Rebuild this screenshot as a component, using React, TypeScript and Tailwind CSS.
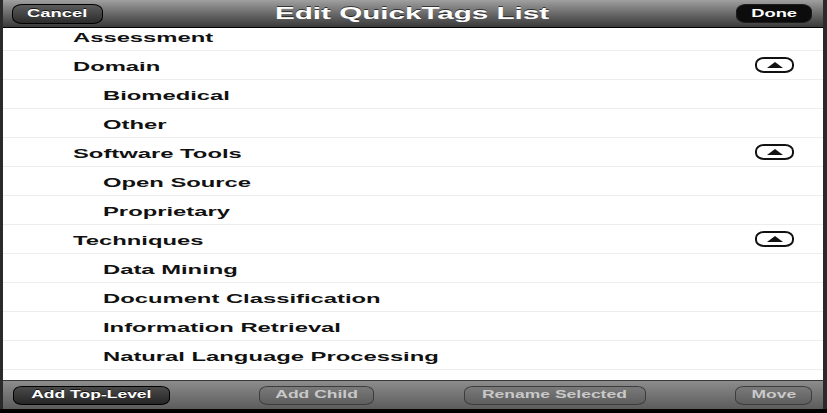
import { ReactNode } from "react";

type Tag = { label: string; level: 0 | 1; collapsible?: boolean };

const tags: Tag[] = [
  { label: "Assessment", level: 0 },
  { label: "Domain", level: 0, collapsible: true },
  { label: "Biomedical", level: 1 },
  { label: "Other", level: 1 },
  { label: "Software Tools", level: 0, collapsible: true },
  { label: "Open Source", level: 1 },
  { label: "Proprietary", level: 1 },
  { label: "Techniques", level: 0, collapsible: true },
  { label: "Data Mining", level: 1 },
  { label: "Document Classification", level: 1 },
  { label: "Information Retrieval", level: 1 },
  { label: "Natural Language Processing", level: 1 },
];

// the screen is drawn wide, so text is stretched sideways
function Wide({ children, left }: { children: ReactNode; left?: boolean }) {
  return (
    <span className={left ? "inline-block origin-left scale-x-[1.83]" : "inline-block origin-center scale-x-[1.75]"}>
      {children}
    </span>
  );
}

function BarButton({
  label,
  width,
  disabled,
}: {
  label: string;
  width: string;
  disabled?: boolean;
}) {
  return (
    <button
      className={
        "h-[19px] rounded-[9px/6px] border text-[10px] font-bold leading-none flex items-center justify-center " +
        width +
        (disabled
          ? " border-[#3c3c3c] bg-gradient-to-b from-[#7a7a7a] to-[#5e5e5e] text-[#c9c9c9]"
          : " border-black bg-gradient-to-b from-[#4a4a4a] to-[#262626] text-white [text-shadow:0_-1px_0_rgba(0,0,0,0.7)]")
      }
    >
      <Wide>{label}</Wide>
    </button>
  );
}

function CollapseToggle() {
  return (
    <button className="w-[39px] h-[16px] rounded-[9px/7px] border-2 border-[#111] bg-white flex items-center justify-center">
      <svg width="16" height="6" viewBox="0 0 16 6">
        <polygon points="8,0 16,6 0,6" fill="#111" />
      </svg>
    </button>
  );
}

export default function App() {
  return (
    <div className="w-[827px] h-[413px] bg-[#2a2a2a] flex flex-col font-['Liberation_Sans',Arial,sans-serif] overflow-hidden">
      <div className="flex-1 flex flex-col ml-[3px] mr-[4px] min-h-0">
        {/* nav bar */}
        <div className="h-[28px] shrink-0 grid grid-cols-[1fr_auto_1fr] items-center px-[9px] pr-[11px] bg-gradient-to-b from-[#a0a0a0] via-[#6a6a6a] to-[#3a3a3a] border-b border-black">
          <div>
            <button className="w-[91px] h-[20px] rounded-[10px/7px] border border-black bg-gradient-to-b from-[#5c5c5c] to-[#2c2c2c] text-white text-[10.5px] font-bold leading-none flex items-center justify-center [text-shadow:0_-1px_0_rgba(0,0,0,0.7)]">
              <Wide>Cancel</Wide>
            </button>
          </div>
          <h1 className="text-white text-[16px] font-bold leading-none [text-shadow:0_-1px_0_rgba(0,0,0,0.6)]">
            <span className="inline-block origin-center scale-x-[1.85]">Edit QuickTags List</span>
          </h1>
          <div className="flex justify-end">
            <button className="w-[76px] h-[19px] rounded-[10px/7px] border border-[#1c1c1c] bg-[#0c0c0c] text-white text-[10.5px] font-bold leading-none flex items-center justify-center">
              <Wide>Done</Wide>
            </button>
          </div>
        </div>

        {/* tag list */}
        <div className="flex-1 min-h-0 bg-white overflow-hidden">
          <ul className="-mt-[6px]">
            {tags.map((t) => (
              <li
                key={t.label}
                className={
                  "h-[29px] flex items-center justify-between border-b border-[#ededed] pr-[29px] " +
                  (t.level === 0 ? "pl-[70px]" : "pl-[100px]")
                }
              >
                <span className="text-[13px] font-bold text-[#111] leading-none pt-[3px]">
                  <Wide left>{t.label}</Wide>
                </span>
                {t.collapsible && <CollapseToggle />}
              </li>
            ))}
          </ul>
        </div>

        {/* bottom toolbar */}
        <div className="h-[29px] shrink-0 flex items-center justify-between pl-[10px] pr-[11px] border-t border-[#3a3a3a] bg-gradient-to-b from-[#8c8c8c] to-[#5c5c5c]">
          <BarButton label="Add Top-Level" width="w-[157px]" />
          <BarButton label="Add Child" width="w-[115px]" disabled />
          <BarButton label="Rename Selected" width="w-[182px]" disabled />
          <BarButton label="Move" width="w-[77px]" disabled />
        </div>
      </div>
      <div className="h-[4px] shrink-0 bg-black" />
    </div>
  );
}
